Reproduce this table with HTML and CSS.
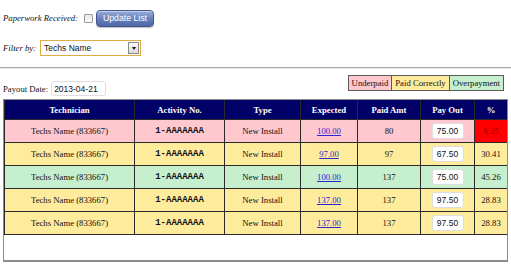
FILE: index.html
```html
<!DOCTYPE html>
<html>
<head>
<meta charset="utf-8">
<title>Payouts</title>
<link rel="stylesheet" href="styles.css">
</head>
<body>
<div class="filters">
  <div class="line line-paperwork">
    <span class="lbl-italic">Paperwork Received:</span>
    <input type="checkbox" class="chk">
    <button class="btn-update" type="button">Update List</button>
  </div>
  <div class="line line-filter">
    <span class="lbl-italic">Filter by:</span>
    <div class="select-box">
      <select class="select-native"><option>Techs Name</option></select>
      <span class="select-arrow"><span class="tri"></span></span>
    </div>
  </div>
</div>
<hr class="divider">
<div class="bar">
  <div class="payout">
    <span class="lbl">Payout Date:</span>
    <input class="field date-field" type="text" value="2013-04-21">
  </div>
  <div class="legend">
    <span class="key under">Underpaid</span>
    <span class="key correct">Paid Correctly</span>
    <span class="key over">Overpayment</span>
  </div>
</div>
<div class="grid-box">
  <table class="grid">
    <colgroup>
      <col class="c-tech"><col class="c-act"><col class="c-type"><col class="c-exp"><col class="c-paid"><col class="c-pay"><col class="c-pct">
    </colgroup>
    <thead>
      <tr><th>Technician</th><th>Activity No.</th><th>Type</th><th>Expected</th><th>Paid Amt</th><th>Pay Out</th><th>%</th></tr>
    </thead>
    <tbody>
      <tr class="under">
        <td>Techs Name (833667)</td><td class="act">1-AAAAAAA</td><td>New Install</td>
        <td><a href="#">100.00</a></td><td>80</td>
        <td><input class="field pay-field" type="text" value="75.00"></td><td class="pct-alert">6.25</td>
      </tr>
      <tr class="correct">
        <td>Techs Name (833667)</td><td class="act">1-AAAAAAA</td><td>New Install</td>
        <td><a href="#">97.00</a></td><td>97</td>
        <td><input class="field pay-field" type="text" value="67.50"></td><td>30.41</td>
      </tr>
      <tr class="over">
        <td>Techs Name (833667)</td><td class="act">1-AAAAAAA</td><td>New Install</td>
        <td><a href="#">100.00</a></td><td>137</td>
        <td><input class="field pay-field" type="text" value="75.00"></td><td>45.26</td>
      </tr>
      <tr class="correct">
        <td>Techs Name (833667)</td><td class="act">1-AAAAAAA</td><td>New Install</td>
        <td><a href="#">137.00</a></td><td>137</td>
        <td><input class="field pay-field" type="text" value="97.50"></td><td>28.83</td>
      </tr>
      <tr class="correct">
        <td>Techs Name (833667)</td><td class="act">1-AAAAAAA</td><td>New Install</td>
        <td><a href="#">137.00</a></td><td>137</td>
        <td><input class="field pay-field" type="text" value="97.50"></td><td>28.83</td>
      </tr>
    </tbody>
  </table>
</div>
</body>
</html>
```
FILE: styles.css
```css
html, body {
  margin: 0;
  padding: 0;
  background: #ffffff;
}

body {
  padding: 0 3px;
  font-family: "Liberation Serif", "Times New Roman", serif;
  font-size: 8.7px;
  color: #111;
}

/* filter lines */
.filters {
  padding-top: 9px;
}

.line {
  display: flex;
  align-items: center;
}

.line-paperwork {
  height: 18px;
}

.line-filter {
  height: 16px;
  margin-top: 13px;
}

.lbl-italic {
  font-style: italic;
}

.chk {
  margin: 0 3px 0 6px;
  width: 9px;
  height: 9px;
  appearance: none;
  border: 1px solid #9a9a9a;
  background: linear-gradient(#e9e9e9, #fafafa);
  border-radius: 1px;
}

.btn-update {
  height: 17px;
  padding: 0 6px;
  font-family: "Liberation Sans", Arial, sans-serif;
  font-size: 8.7px;
  color: #ffffff;
  background: linear-gradient(#98acd8, #6780bd 55%, #4c65a6);
  border: 1px solid #41568e;
  border-radius: 4px;
  box-shadow: inset 0 1px 0 rgba(255, 255, 255, 0.45), 0 1px 1px rgba(0, 0, 0, 0.25);
  cursor: pointer;
}

.select-box {
  display: flex;
  align-items: stretch;
  margin-left: 4px;
  width: 99px;
  height: 14px;
  border: 1px solid #dcae48;
  background: #ffffff;
}

.select-native {
  flex: 1;
  min-width: 0;
  appearance: none;
  border: 0;
  padding: 0 0 0 3px;
  margin: 0;
  background: transparent;
  font-family: "Liberation Sans", Arial, sans-serif;
  font-size: 8.5px;
  color: #111;
  outline: none;
}

.select-arrow {
  width: 9px;
  margin: 1px;
  border: 1px solid #8a8a8a;
  background: linear-gradient(#f8f8f8, #dcdcdc);
  display: flex;
  align-items: center;
  justify-content: center;
}

.tri {
  width: 0;
  height: 0;
  border-left: 2.5px solid transparent;
  border-right: 2.5px solid transparent;
  border-top: 3px solid #111;
}

.divider {
  margin: 11px -3px 0;
  border: 0;
  border-top: 1px solid #a8a8a8;
  border-bottom: 1px solid #ececec;
  height: 0;
}

/* payout date + legend */
.bar {
  display: flex;
  justify-content: space-between;
  align-items: flex-start;
  height: 30px;
}

.payout {
  display: flex;
  align-items: center;
  margin-top: 12px;
}

.lbl {
  margin-right: 3px;
}

.field {
  font-family: "Liberation Sans", Arial, sans-serif;
  font-size: 8.5px;
  color: #111;
  background: #ffffff;
  border: 1px solid #dedede;
  border-radius: 3px;
  box-sizing: border-box;
  outline: none;
}

.date-field {
  width: 55px;
  height: 15px;
  padding: 0 2px;
}

.legend {
  display: flex;
  margin-top: 6px;
  margin-right: 4px;
}

.key {
  border: 1px solid #5a5a5a;
  height: 16px;
  box-sizing: border-box;
  line-height: 14px;
  padding: 0 3px;
}

.key + .key {
  border-left: 0;
}

.key.under { background: #ffc7ce; }
.key.correct { background: #ffeb9c; }
.key.over { background: #c6efce; }

/* grid */
.grid-box {
  border: 1px solid #8c8c8c;
  border-bottom-width: 2px;
  height: 160px;
  box-sizing: content-box;
  overflow: hidden;
}

.grid {
  width: 503px;
  border-collapse: collapse;
  table-layout: fixed;
  margin: -1px 0 0 0;
}

.c-tech { width: 130px; }
.c-act { width: 90px; }
.c-type { width: 76px; }
.c-exp { width: 57px; }
.c-paid { width: 63px; }
.c-pay { width: 54px; }
.c-pct { width: 33px; }

.grid th {
  background: #000066;
  color: #ffffff;
  font-weight: bold;
  height: 19px;
  padding: 0;
  border: 1px solid #2a2a2a;
  text-align: center;
}

.grid td {
  height: 22px;
  padding: 0;
  border: 1px solid #2a2a2a;
  text-align: center;
  vertical-align: middle;
}

.grid tr.under td { background: #ffc7ce; }
.grid tr.correct td { background: #ffeb9c; }
.grid tr.over td { background: #c6efce; }

.grid tr td.pct-alert {
  background: #ff0000;
  color: #8b0000;
}

.grid a {
  color: #2a24d6;
  text-decoration: underline;
}

.act {
  font-family: "Liberation Mono", "DejaVu Sans Mono", monospace;
  font-weight: bold;
  font-size: 9px;
  letter-spacing: 0;
}

.pay-field {
  width: 32px;
  height: 16px;
  padding: 0;
  text-align: center;
  vertical-align: middle;
}
```
